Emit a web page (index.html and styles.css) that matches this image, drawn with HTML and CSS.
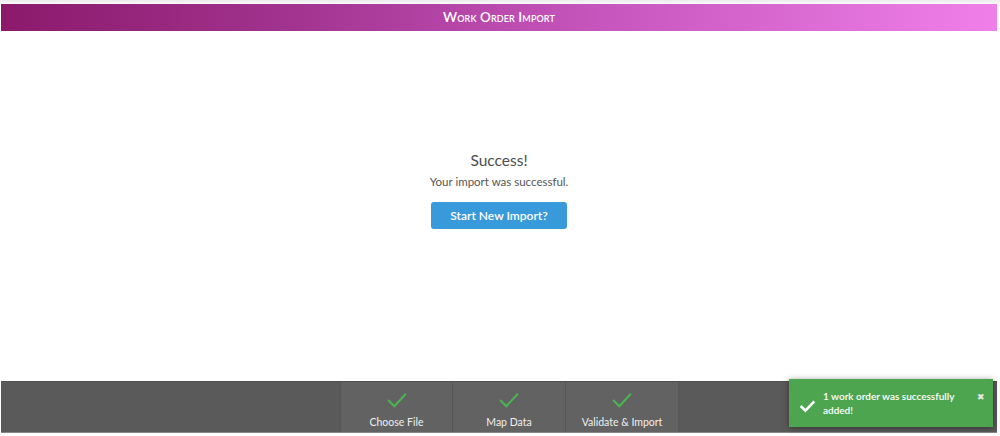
FILE: index.html
```html
<!DOCTYPE html>
<html>
<head>
<meta charset="utf-8">
<link rel="stylesheet" href="styles.css">
</head>
<body>
<div class="app">
  <header class="titlebar">Work Order Import</header>
  <main class="content">
    <h1 class="title">Success!</h1>
    <p class="subtitle">Your import was successful.</p>
    <button class="btn">Start New Import?</button>
  </main>
  <footer class="steps">
    <div class="step">
      <svg class="check" viewBox="0 0 24 18" width="22" height="16"><path d="M2 9 L9 16 L22 2" fill="none" stroke="#4cb552" stroke-width="2.2"/></svg>
      <span>Choose File</span>
    </div>
    <div class="step">
      <svg class="check" viewBox="0 0 24 18" width="22" height="16"><path d="M2 9 L9 16 L22 2" fill="none" stroke="#4cb552" stroke-width="2.2"/></svg>
      <span>Map Data</span>
    </div>
    <div class="step">
      <svg class="check" viewBox="0 0 24 18" width="22" height="16"><path d="M2 9 L9 16 L22 2" fill="none" stroke="#4cb552" stroke-width="2.2"/></svg>
      <span>Validate &amp; Import</span>
    </div>
  </footer>
  <div class="toast">
    <svg class="toast-icon" viewBox="0 0 20 16" width="17" height="14"><path d="M2 8 L7.5 13.5 L18 2.5" fill="none" stroke="#fff" stroke-width="3"/></svg>
    <div class="toast-text">1 work order was successfully added!</div>
    <span class="toast-close">✖</span>
  </div>
</div>
</body>
</html>
```

FILE: styles.css
```css
html, body {
  margin: 0;
  padding: 0;
  background: #fff;
}
body {
  font-family: "Lato", "Noto Sans", sans-serif;
  width: 1000px;
  height: 436px;
  overflow: hidden;
  background: linear-gradient(to bottom, #ececec 0, #fafafa 4px, #fff 5px);
}
.app {
  position: relative;
  margin: 4px 3px 0 1px;
  height: 432px;
  display: flex;
  flex-direction: column;
  background: #fff;
}
.titlebar {
  height: 27px;
  flex: none;
  display: flex;
  align-items: center;
  justify-content: center;
  color: #fff;
  font-variant: small-caps;
  font-size: 13.5px;
  font-weight: 600;
  letter-spacing: 0.1px;
  background: linear-gradient(to right, #8b1a6b 0%, #a33490 30%, #c656bd 60%, #f07fea 100%);
  padding-bottom: 1px;
  box-sizing: border-box;
}
.content {
  flex: 1;
  display: flex;
  flex-direction: column;
  align-items: center;
  padding-top: 119px;
  color: #555;
}
.title {
  margin: 0;
  font-size: 15.5px;
  font-weight: 400;
  line-height: 20px;
  color: #4d4d4d;
}
.subtitle {
  margin: 3px 0 0;
  font-size: 11.5px;
  line-height: 18px;
  color: #555;
}
.btn {
  margin-top: 11px;
  width: 136px;
  height: 27px;
  border: none;
  border-radius: 3px;
  background: #3899db;
  color: #fff;
  font-family: inherit;
  font-size: 12px;
  font-weight: 600;
  padding: 0;
}
.steps {
  flex: none;
  height: 52px;
  margin-bottom: 3px;
  background: #5a5a5a;
  border-top: 1px solid #4e4e4e;
  border-bottom: 1px solid #888;
  display: flex;
  padding-left: 339px;
  box-sizing: border-box;
}
.step {
  width: 113px;
  background: #626262;
  border-right: 1px solid #575757;
  display: flex;
  flex-direction: column;
  align-items: center;
  padding-top: 10px;
  box-sizing: border-box;
}
.step:first-child {
  border-left: 1px solid #575757;
}
.step span {
  margin-top: 8px;
  font-size: 10.5px;
  color: #f0f0f0;
  font-weight: 400;
}
.toast {
  position: absolute;
  left: 788px;
  top: 375px;
  width: 204px;
  height: 48px;
  background: #4da550;
  box-shadow: 0 1px 6px rgba(0, 0, 0, 0.45);
  display: flex;
  align-items: flex-start;
  box-sizing: border-box;
  padding: 10px 8px 0 10px;
  color: #fff;
}
.toast-icon {
  flex: none;
  margin-top: 10px;
}
.toast-text {
  margin-left: 7px;
  width: 140px;
  font-size: 10px;
  font-weight: 600;
  line-height: 14px;
}
.toast-close {
  margin-left: auto;
  font-size: 9px;
  color: #e8e8e8;
  margin-top: 2px;
}
```
